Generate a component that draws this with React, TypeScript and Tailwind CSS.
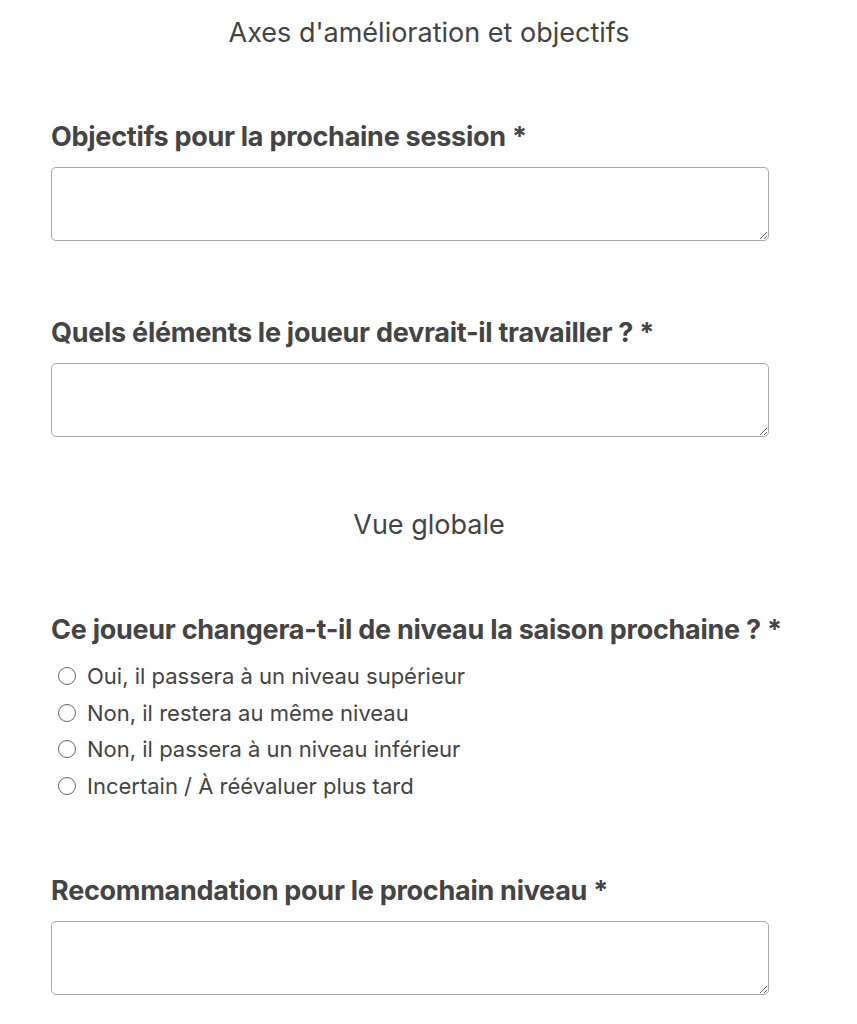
const options = [
  "Oui, il passera à un niveau supérieur",
  "Non, il restera au même niveau",
  "Non, il passera à un niveau inférieur",
  "Incertain / À réévaluer plus tard",
];

function SectionTitle({ children }: { children: React.ReactNode }) {
  return (
    <h2 className="text-center text-[27px] font-normal leading-none text-[#444]">
      {children}
    </h2>
  );
}

function Label({ children }: { children: React.ReactNode }) {
  return (
    <label className="block text-[27px] font-bold leading-none tracking-[-0.01em] text-[#444]">
      {children} *
    </label>
  );
}

function Field({ label }: { label: string }) {
  return (
    <div>
      <Label>{label}</Label>
      <textarea className="mt-[17px] block h-[74px] w-[718px] rounded-[5px] border border-[#a9a9a9] bg-white" />
    </div>
  );
}

export default function App() {
  return (
    <div
      className="min-h-screen bg-white pl-[51px] pt-[19px]"
      style={{ fontFamily: "Inter, 'Liberation Sans', sans-serif" }}
    >
      <div className="w-[756px]">
        <SectionTitle>Axes d'amélioration et objectifs</SectionTitle>

        <div className="mt-[77px]">
          <Field label="Objectifs pour la prochaine session" />
        </div>

        <div className="mt-[78px]">
          <Field label="Quels éléments le joueur devrait-il travailler ?" />
        </div>

        <div className="mt-[74px]">
          <SectionTitle>Vue globale</SectionTitle>
        </div>

        <div className="mt-[78px]">
          <Label>Ce joueur changera-t-il de niveau la saison prochaine ?</Label>
          <div className="mt-[21px] flex flex-col gap-[12.5px]">
            {options.map((opt) => (
              <label key={opt} className="flex items-center gap-[11px] pl-[7px] text-[22px] leading-[24px] text-[#444]">
                <span className="h-[18px] w-[18px] rounded-full border border-[#666]" />
                {opt}
              </label>
            ))}
          </div>
        </div>

        <div className="mt-[79px]">
          <Field label="Recommandation pour le prochain niveau" />
        </div>
      </div>
    </div>
  );
}
